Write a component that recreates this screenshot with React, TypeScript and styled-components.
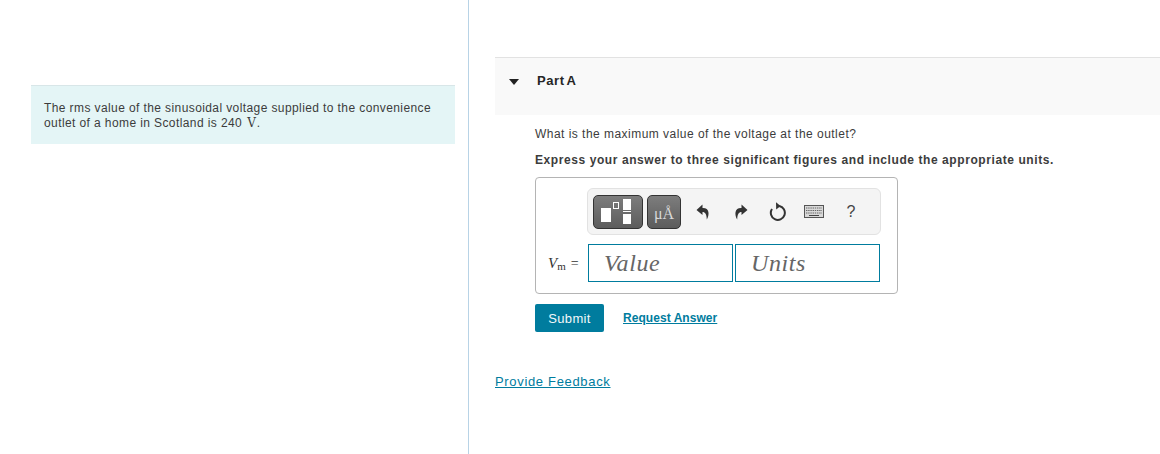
import React from "react";
import styled, { createGlobalStyle } from "styled-components";

const Global = createGlobalStyle`
  html, body { margin: 0; padding: 0; background: #fff; }
  body { font-family: "Liberation Sans", Arial, sans-serif; color: #333; font-size: 12px; }
`;

const Page = styled.div`
  display: flex;
  width: 1160px;
  height: 454px;
  overflow: hidden;
`;
const LeftColumn = styled.aside`
  box-sizing: border-box;
  width: 469px;
  flex: none;
  padding: 85px 13px 0 31px;
  border-right: 1px solid #b8d3e6;
`;
const Callout = styled.div`
  box-sizing: border-box;
  height: 59px;
  padding: 15px 13px 0;
  background: #e4f5f6;
  border-top: 1px solid #d8e6e8;
  font-size: 12px;
  line-height: 15px;
  letter-spacing: 0.4px;
  color: #3c3c3c;
`;
const CalloutLine = styled.div`
  white-space: nowrap;
  height: 15px;
`;
const MathV = styled.span`
  font-family: "DejaVu Serif", "Liberation Serif", serif;
  font-size: 12px;
  letter-spacing: 0;
  margin: 0 1px 0 5px;
`;
const RightColumn = styled.main`
  flex: 1;
  min-width: 0;
  padding: 57px 0 0 26px;
`;
const PartHeader = styled.header`
  box-sizing: border-box;
  height: 58px;
  display: flex;
  align-items: flex-start;
  padding: 15px 0 0 14px;
  background: #f9f9f9;
  border-top: 1px solid #e2e2e2;
`;
const Caret = styled.span`
  width: 0;
  height: 0;
  margin-top: 6px;
  border-left: 5px solid transparent;
  border-right: 5px solid transparent;
  border-top: 6px solid #222;
`;
const PartTitle = styled.h2`
  margin: 0 0 0 18px;
  font-size: 13px;
  line-height: 16px;
  font-weight: 700;
  letter-spacing: 0.6px;
  word-spacing: -2px;
  color: #262626;
`;
const Body = styled.section`
  padding: 11px 0 0 40px;
`;
const Question = styled.p`
  margin: 0;
  font-size: 12px;
  line-height: 16px;
  letter-spacing: 0.47px;
  color: #3c3c3c;
`;
const Instruction = styled.p`
  margin: 10px 0 0;
  font-size: 12px;
  line-height: 16px;
  font-weight: 700;
  letter-spacing: 0.58px;
  color: #3c3c3c;
`;
const AnswerBox = styled.div`
  box-sizing: border-box;
  width: 363px;
  height: 117px;
  margin-top: 9px;
  padding: 10px 16px 0 11px;
  border: 1px solid #b4b4b4;
  border-radius: 4px;
  background: #fff;
`;
const Toolbar = styled.div`
  box-sizing: border-box;
  width: 294px;
  height: 47px;
  margin-left: 40px;
  display: flex;
  align-items: center;
  padding: 0 5px;
  background: #f4f4f4;
  border: 1px solid #e2e2e2;
  border-radius: 6px;
`;
const ToolButton = styled.div<{ $w: number }>`
  box-sizing: border-box;
  width: ${(p) => p.$w}px;
  height: 34px;
  flex: none;
  margin-right: 4px;
  display: flex;
  align-items: center;
  justify-content: center;
  background: linear-gradient(#7d7d7d, #5c5c5c);
  border: 1px solid #333;
  border-radius: 5px;
  color: #d8d8d8;
`;
const UnitLabel = styled.span`
  font-family: "Liberation Serif", serif;
  font-size: 16px;
  line-height: 19px;
  padding-top: 3px;
`;
const IconSlot = styled.div<{ $w: number }>`
  width: ${(p) => p.$w}px;
  flex: none;
  display: flex;
  justify-content: center;
  align-items: center;
  color: #333;
`;
const Help = styled.span`
  font-size: 16px;
  color: #444;
`;
const InputRow = styled.div`
  display: flex;
  align-items: center;
  margin-top: 9px;
`;
const VarLabel = styled.div`
  width: 41px;
  flex: none;
  box-sizing: border-box;
  padding-left: 1px;
  font-family: "Liberation Serif", serif;
  font-size: 14px;
  color: #333;
  white-space: nowrap;
  em { font-size: 15px; }
  sub { font-size: 11px; line-height: 0; vertical-align: -2px; margin-right: 5px; }
`;
const FieldBox = styled.div`
  box-sizing: border-box;
  width: 145px;
  height: 38px;
  margin-right: 2px;
  padding-left: 15px;
  display: flex;
  align-items: center;
  border: 1px solid #007c9e;
  background: #fff;
  font-family: "Liberation Serif", serif;
  font-style: italic;
  font-size: 24px;
  letter-spacing: 0.6px;
  color: #666;
  &:last-child { margin-right: 0; }
`;
const Actions = styled.div`
  display: flex;
  align-items: center;
  margin-top: 10px;
`;
const SubmitButton = styled.button`
  box-sizing: border-box;
  width: 69px;
  height: 28px;
  padding: 0;
  border: none;
  border-radius: 2px;
  background: #007c9e;
  color: #f2f8fa;
  font-family: inherit;
  font-size: 13px;
  letter-spacing: 0.3px;
`;
const RequestLink = styled.a`
  margin-left: 19px;
  font-size: 12px;
  font-weight: 700;
  letter-spacing: 0.05px;
  color: #007c9e;
  text-decoration: underline;
`;
const Feedback = styled.a`
  display: block;
  width: fit-content;
  margin-top: 42px;
  font-size: 13px;
  line-height: 16px;
  letter-spacing: 0.67px;
  color: #007c9e;
  text-decoration: underline;
`;

const TemplatesIcon = () => (
  <svg width="48" height="32" viewBox="1 1 48 32">
    <rect x="8" y="13" width="10" height="14" fill="#fff" />
    <rect x="20.5" y="7.5" width="5" height="6" fill="none" stroke="#fff" strokeWidth="1" />
    <rect x="30" y="4" width="8" height="11" fill="#fff" />
    <rect x="30" y="16" width="8" height="1" fill="#fff" />
    <rect x="30" y="19" width="8" height="10" fill="#fff" />
  </svg>
);
const Undo = ({ flip }: { flip?: boolean }) => (
  <svg width="14" height="16" viewBox="0 0 14 16" style={flip ? { transform: "scaleX(-1)" } : undefined}>
    <path d="M6.5 0.5 L0.5 6 L6.5 11 V8 C9.2 8 10.6 10 10.8 15.5 C13.8 10.5 13.4 3.6 6.5 4 Z" fill="#333" />
  </svg>
);
const Reset = () => (
  <svg width="17" height="19" viewBox="0 0 17 19">
    <path d="M10.2 4 A7 7 0 1 1 3 7" fill="none" stroke="#333" strokeWidth="2" />
    <path d="M7 0.3 L11.6 4 L7.2 7.6 Z" fill="#333" />
  </svg>
);
const Keyboard = () => (
  <svg width="20" height="13" viewBox="0 0 20 13">
    <rect x="0.5" y="0.5" width="19" height="12" fill="#d8d8d8" stroke="#555" />
    <path d="M2 3h16M2 5.5h16" stroke="#666" strokeWidth="1" strokeDasharray="1.4 .8" />
    <path d="M2 8h16" stroke="#666" strokeWidth="1" strokeDasharray="1.4 .8" />
    <path d="M5 10.5h10" stroke="#444" strokeWidth="1" />
  </svg>
);

export default function App() {
  return (
    <Page>
      <Global />
      <LeftColumn>
        <Callout>
          <CalloutLine>The rms value of the sinusoidal voltage supplied to the convenience</CalloutLine>
          <CalloutLine>outlet of a home in Scotland is 240<MathV>V</MathV>.</CalloutLine>
        </Callout>
      </LeftColumn>
      <RightColumn>
        <PartHeader>
          <Caret />
          <PartTitle>Part A</PartTitle>
        </PartHeader>
        <Body>
          <Question>What is the maximum value of the voltage at the outlet?</Question>
          <Instruction>Express your answer to three significant figures and include the appropriate units.</Instruction>
          <AnswerBox>
            <Toolbar>
              <ToolButton $w={50}><TemplatesIcon /></ToolButton>
              <ToolButton $w={34}><UnitLabel>μÅ</UnitLabel></ToolButton>
              <IconSlot $w={35}><Undo /></IconSlot>
              <IconSlot $w={42}><Undo flip /></IconSlot>
              <IconSlot $w={30}><Reset /></IconSlot>
              <IconSlot $w={44}><Keyboard /></IconSlot>
              <IconSlot $w={30}><Help>?</Help></IconSlot>
            </Toolbar>
            <InputRow>
              <VarLabel><em>V</em><sub>m</sub>=</VarLabel>
              <FieldBox>Value</FieldBox>
              <FieldBox>Units</FieldBox>
            </InputRow>
          </AnswerBox>
          <Actions>
            <SubmitButton>Submit</SubmitButton>
            <RequestLink>Request Answer</RequestLink>
          </Actions>
        </Body>
        <Feedback>Provide Feedback</Feedback>
      </RightColumn>
    </Page>
  );
}
